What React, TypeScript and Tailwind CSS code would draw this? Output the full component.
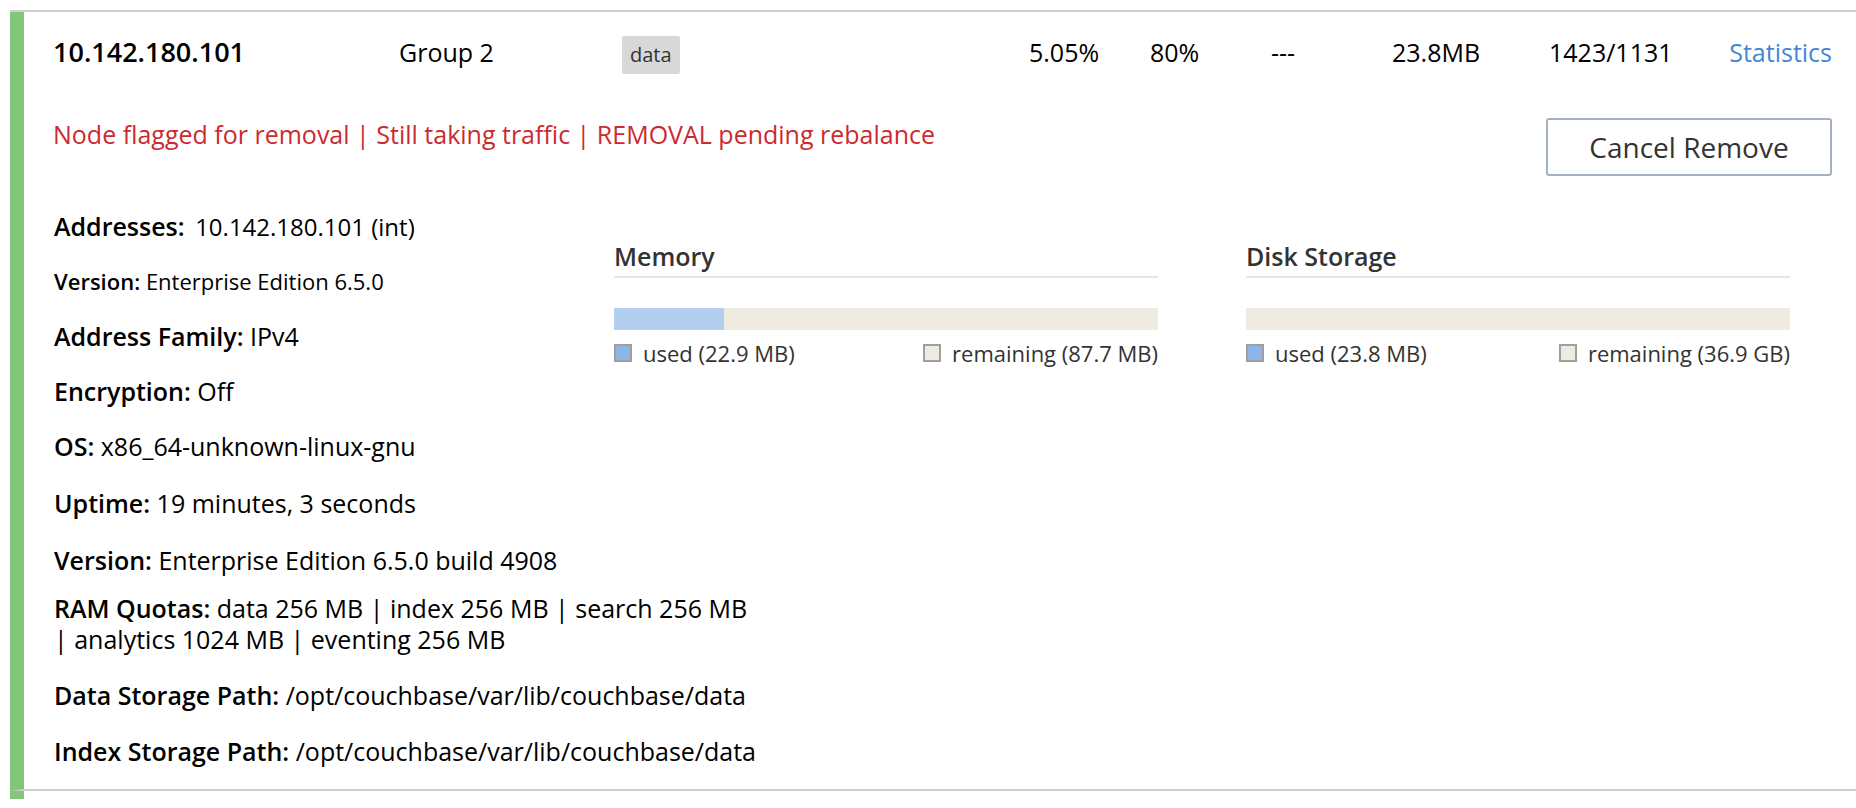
import React from "react";

type Detail = { label: string; value: string; valueClass?: string; rowClass?: string };

const primaryDetails: Detail[] = [
  {
    label: "Addresses:",
    value: "10.142.180.101 (int)",
    valueClass: "ml-1 text-[24px]",
  },
  { label: "Version:", value: "Enterprise Edition 6.5.0", rowClass: "text-[22px]" },
  { label: "Address Family:", value: "IPv4" },
  { label: "Encryption:", value: "Off" },
];

const systemDetails: Detail[] = [
  { label: "OS:", value: "x86_64-unknown-linux-gnu" },
  { label: "Uptime:", value: "19 minutes, 3 seconds" },
  { label: "Version:", value: "Enterprise Edition 6.5.0 build 4908" },
];

const quotaDetails: Detail[] = [
  {
    label: "RAM Quotas:",
    value: "data 256 MB | index 256 MB | search 256 MB | analytics 1024 MB | eventing 256 MB",
  },
  { label: "Data Storage Path:", value: "/opt/couchbase/var/lib/couchbase/data" },
  { label: "Index Storage Path:", value: "/opt/couchbase/var/lib/couchbase/data" },
];

function DetailList({ items, gap }: { items: Detail[]; gap: string }) {
  return (
    <dl className={`flex flex-col text-[25px] leading-[31px] ${gap}`}>
      {items.map((item) => (
        <div key={item.label} className={item.rowClass}>
          <dt className="inline font-semibold">{item.label}</dt>{" "}
          <dd className={`inline ${item.valueClass ?? ""}`}>{item.value}</dd>
        </div>
      ))}
    </dl>
  );
}

function Legend({ color, text }: { color: string; text: string }) {
  return (
    <li className="flex items-center gap-[11px]">
      <span className={`size-[18px] border-2 border-[#9f9f9f] ${color}`} />
      {text}
    </li>
  );
}

function UsageMeter({
  title,
  used,
  remaining,
  percent,
}: {
  title: string;
  used: string;
  remaining: string;
  percent: number;
}) {
  return (
    <section className="min-w-0 flex-1 text-[#333333]">
      <h2 className="border-b-2 border-[#e6e6e6] pb-1 text-[25px] leading-[31px] font-semibold">
        {title}
      </h2>
      <div className="mt-[30px] h-[22px] bg-[#efebe0]">
        <div className="h-full bg-[#b3cfef]" style={{ width: `${percent}%` }} />
      </div>
      <ul className="mt-2 flex justify-between text-[22px] leading-[30px] whitespace-nowrap">
        <Legend color="bg-[#8db5e8]" text={`used (${used})`} />
        <Legend color="bg-[#efebe0]" text={`remaining (${remaining})`} />
      </ul>
    </section>
  );
}

export default function App() {
  return (
    <main className="bg-white pt-[10px] pl-[10px] font-['Open_Sans','Noto_Sans',sans-serif] text-black">
      <article className="border-t-2 border-[#d0d0d0]">
        <div className="border-l-[14px] border-[#81c679] pb-2">
          <div className="relative border-b-2 border-[#d0d0d0] pt-[23px] pr-6 pb-[22px] pl-[29px]">
            <header className="grid grid-cols-[346fr_223fr_407fr_121fr_121fr_121fr_157fr_179fr_104fr] items-baseline text-[25px] leading-[34px] whitespace-nowrap">
              <h1 className="text-[27px] font-semibold">10.142.180.101</h1>
              <span>Group 2</span>
              <span>
                <span className="inline-block rounded-[2px] bg-[#d8d8d8] px-2 py-[2px] text-[20px] text-[#333333]">
                  data
                </span>
              </span>
              <span>5.05%</span>
              <span>80%</span>
              <span>---</span>
              <span>23.8MB</span>
              <span>1423/1131</span>
              <a href="#statistics" className="text-right text-[#4287d6]">
                Statistics
              </a>
            </header>

            <div className="mt-11 flex items-start justify-between">
              <p className="text-[25px] leading-[32px] text-[#cc2a2f]">
                Node flagged for removal | Still taking traffic | REMOVAL pending rebalance
              </p>
              <button
                type="button"
                className="h-[58px] w-[286px] rounded-[3px] border-2 border-[#a4b1c1] bg-white text-[28px] text-[#333333]"
              >
                Cancel Remove
              </button>
            </div>

            <div className="mt-[35px] flex items-start">
              <div className="w-[561px] shrink-0 pl-px">
                <DetailList items={primaryDetails} gap="gap-6" />
              </div>
              <div className="mt-[30px] mr-[42px] flex flex-1 gap-[88px]">
                <UsageMeter title="Memory" used="22.9 MB" remaining="87.7 MB" percent={20.2} />
                <UsageMeter title="Disk Storage" used="23.8 MB" remaining="36.9 GB" percent={0} />
              </div>
            </div>

            <div className="mt-6 flex max-w-[705px] flex-col gap-[17px] pl-px">
              <DetailList items={systemDetails} gap="gap-[26px]" />
              <DetailList items={quotaDetails} gap="gap-[25px]" />
            </div>

            <svg
              className="absolute -bottom-[2px] -left-[14px] h-[2px] w-[14px]"
              viewBox="0 0 14 2"
              aria-hidden="true"
            >
              <polygon points="1,1.5 14,0 14,2" fill="#d0d0d0" />
            </svg>
          </div>
        </div>
      </article>
    </main>
  );
}
